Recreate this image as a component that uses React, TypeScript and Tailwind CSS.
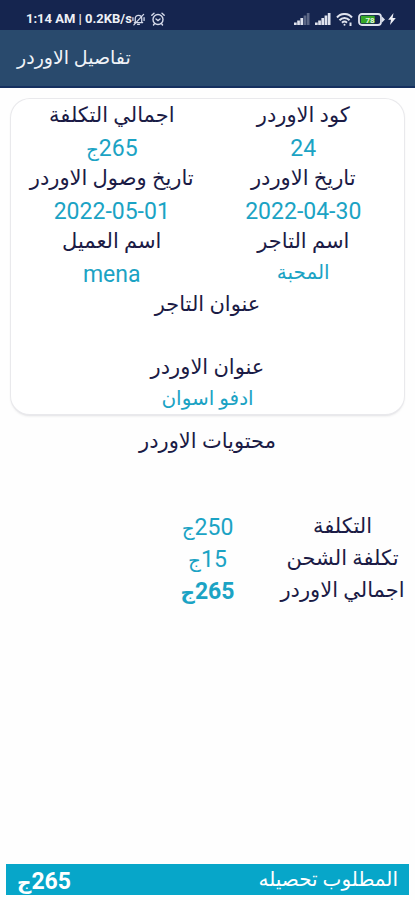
import React from "react";

const label = "h-[31px] text-center text-[21px] leading-[33px] whitespace-nowrap text-[#1b1b45]";
const value = "h-8 text-center text-[23px] leading-[37px] text-[#1ba3c4]";
const arabicValue = "h-8 text-center text-[20px] leading-[33px] text-[#1ba3c4]";
const total = "h-8 text-center text-[23px] leading-9 text-[#1ba3c4]";

type FieldProps = { name: string; text: string; arabic?: boolean; wide?: boolean };

function Field({ name, text, arabic, wide }: FieldProps) {
  return (
    <div className={wide ? "col-span-2" : ""}>
      <dt className={label}>{name}</dt>
      <dd className={arabic ? arabicValue : value}>{text}</dd>
    </div>
  );
}

function Money({ amount }: { amount: string }) {
  return (
    <>
      {amount}
      <span className="text-[20px]">ج</span>
    </>
  );
}

function Signal({ dim }: { dim?: boolean }) {
  return (
    <svg width="16" height="12" viewBox="0 0 16 12" fill="#dfe3ee" aria-hidden="true">
      <rect x="0" y="9.5" width="2.7" height="2.5" />
      <rect x="3.2" y="7.5" width="2.7" height="4.5" />
      <rect x="6.4" y="5" width="2.7" height="7" />
      <rect x="9.6" y="2.5" width="2.7" height="9.5" opacity={dim ? 0.35 : 1} />
      <rect x="12.8" y="0" width="2.7" height="12" opacity={dim ? 0.35 : 1} />
    </svg>
  );
}

function StatusBar() {
  return (
    <div dir="ltr" className="flex h-[30px] items-end justify-between bg-[#15254f] pr-[19px] pb-[3px] pl-[26px] text-[#eef0f6]">
      <div className="flex h-4 items-center">
        <span className="text-[13px] leading-4 font-bold whitespace-nowrap">1:14 AM | 0.2KB/s</span>
        <div className="flex items-center gap-[6px]">
          <svg width="13" height="13" viewBox="0 0 14 14" fill="none" stroke="#d5daea" strokeWidth="1.4" strokeLinecap="round" aria-hidden="true">
            <path d="M3.5 10V6.2C3.5 4 5 2.6 7 2.6S10.5 4 10.5 6.2V10M2.5 10.3h9M6 12.2h2M12.5 1.5 2 12.8M1 5v3M13 5v3" />
          </svg>
          <svg width="14" height="14" viewBox="0 0 14 14" fill="none" stroke="#d5daea" strokeWidth="1.4" strokeLinecap="round" aria-hidden="true">
            <circle cx="7" cy="7.5" r="5" />
            <path d="M.8 3.3 3 1.2M13.2 3.3 11 1.2M5 7l2 1.5L9 7M3.5 11.6l-1 1.4M10.5 11.6l1 1.4" />
          </svg>
        </div>
      </div>
      <div className="flex h-4 items-center gap-[5px]">
        <Signal dim />
        <Signal />
        <svg width="17" height="13" viewBox="0 0 17 13" fill="none" stroke="#dfe3ee" strokeWidth="2" aria-hidden="true">
          <path d="M1 4.5C5-.2 12-.2 16 4.5M3.5 7.2c2.8-3 7.2-3 10 0M6 9.7c1.5-1.4 3.5-1.4 5 0" />
          <circle cx="8.5" cy="11.8" r="1" fill="#dfe3ee" stroke="none" />
          <path d="M14.5 9.5V13" />
        </svg>
        <div className="flex items-center gap-[3px]">
          <svg width="27" height="13" viewBox="0 0 27 13" aria-hidden="true">
            <rect x="1" y="1" width="22" height="11" rx="3" fill="#15254f" stroke="#dfe3ee" strokeWidth="1.8" />
            <rect x="2.8" y="2.8" width="14" height="7.4" rx="1" fill="#36a928" />
            <path d="M24 3.5v6l3-3z" fill="#dfe3ee" />
            <text x="12" y="9.5" fontSize="8" fontWeight="700" fill="#e7f5df" textAnchor="middle">78</text>
          </svg>
          <svg width="8" height="12" viewBox="0 0 8 12" fill="#eef0f6" aria-hidden="true">
            <path d="M5.5 0 .2 6.8h2.8L2 12l5.8-7H4.6z" />
          </svg>
        </div>
      </div>
    </div>
  );
}

export default function App() {
  return (
    <div dir="rtl" className="flex min-h-screen flex-col bg-[#fefefe] font-[Roboto,'DejaVu_Sans',sans-serif]">
      <StatusBar />
      <header className="flex h-[58px] items-center justify-end border-b-2 border-[#15305f] bg-[#294a6d] px-[17px]">
        <h1 className="text-[19px] leading-8 text-[#f0f3f8]">تفاصيل الاوردر</h1>
      </header>

      <main className="flex grow flex-col">
        <dl className="mx-[10px] mt-[10px] grid grid-cols-2 rounded-[20px] border border-b-2 border-[#e9e9ec] bg-white px-[5px] shadow-xs">
          <Field name="كود الاوردر" text="24" />
          <div>
            <dt className={label}>اجمالي التكلفة</dt>
            <dd className={value}><Money amount="265" /></dd>
          </div>
          <Field name="تاريخ الاوردر" text="2022-04-30" />
          <Field name="تاريخ وصول الاوردر" text="2022-05-01" />
          <Field name="اسم التاجر" text="المحبة" arabic />
          <Field name="اسم العميل" text="mena" />
          <Field name="عنوان التاجر" text="" wide />
          <Field name="عنوان الاوردر" text="ادفو اسوان" arabic wide />
        </dl>

        <h2 className={`${label} mt-[9px]`}>محتويات الاوردر</h2>

        <dl className="mx-[5px] mt-[54px] grid grid-cols-3">
          <dt className={label}>التكلفة</dt>
          <dd className={total}><Money amount="250" /></dd>
          <dt className={`${label} col-start-1`}>تكلفة الشحن</dt>
          <dd className={total}><Money amount="15" /></dd>
          <dt className={`${label} col-start-1`}>اجمالي الاوردر</dt>
          <dd className={`${total} font-bold`}><Money amount="265" /></dd>
        </dl>
      </main>

      <footer className="mx-[6px] mb-[5px] flex h-[31px] items-center justify-between bg-[#07a6c9] px-[11px] text-white">
        <span className="text-[20px] leading-[31px]">المطلوب تحصيله</span>
        <strong className="h-[31px] text-[23px] leading-[35px]"><Money amount="265" /></strong>
      </footer>
    </div>
  );
}
